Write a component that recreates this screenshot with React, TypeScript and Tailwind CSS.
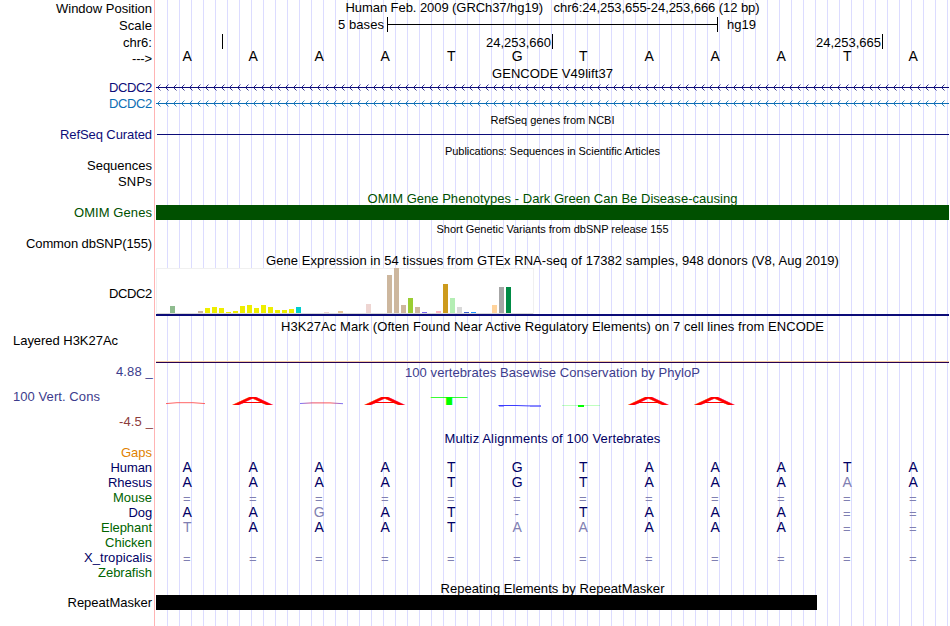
import { useLayoutEffect, useRef } from "react";
import { clsx } from "clsx";

/** Single line of text whose tracking is adjusted so that it fills `width`. */
function Fit({ text, width, className }: { text: string; width: number; className?: string }) {
  const ref = useRef<HTMLSpanElement>(null);
  useLayoutEffect(() => {
    const el = ref.current;
    if (!el) return;
    el.style.letterSpacing = "0px";
    const natural = el.getBoundingClientRect().width;
    el.style.letterSpacing = `${(width - natural) / text.length}px`;
  }, [text, width]);
  return (
    <span ref={ref} className={clsx("inline-block whitespace-pre", className)}>
      {text}
    </span>
  );
}

type LabelRow = { text: string; width: number; className: string };

const LABELS: LabelRow[] = [
  { text: "Window Position", width: 96, className: "mt-px" },
  { text: "Scale", width: 33, className: "mt-0.5" },
  { text: "chr6:", width: 29, className: "mt-0.5" },
  { text: "--->", width: 20, className: "mt-px" },
  { text: "DCDC2", width: 43, className: "mt-3.5 text-[#0c0c78]" },
  { text: "DCDC2", width: 43, className: "mt-px text-[#0c6eb4]" },
  { text: "RefSeq Curated", width: 92, className: "mt-4 text-[#0c0c78]" },
  { text: "Sequences", width: 65, className: "mt-4" },
  { text: "SNPs", width: 34, className: "mt-px" },
  { text: "OMIM Genes", width: 78, className: "mt-4 text-[#005000]" },
  { text: "Common dbSNP(155)", width: 126, className: "mt-4" },
  { text: "DCDC2", width: 43, className: "mt-[35px]" },
  { text: "Layered H3K27Ac", width: 105, className: "mt-8 self-start ml-[13px]" },
  { text: "4.88 _", width: 37, className: "mt-4 text-[#3c3c8c]" },
  { text: "100 Vert. Cons", width: 87, className: "mt-2.5 self-start ml-[13px] text-[#3c3c8c]" },
  { text: "-4.5 _", width: 34, className: "mt-2.5 text-[#8c3c3c]" },
  { text: "Gaps", width: 31, className: "mt-4 text-[#e18200]" },
  { text: "Human", width: 41.5, className: "text-[#000064]" },
  { text: "Rhesus", width: 44, className: "text-[#000064]" },
  { text: "Mouse", width: 39, className: "text-[#006400]" },
  { text: "Dog", width: 23.5, className: "text-[#000064]" },
  { text: "Elephant", width: 51, className: "text-[#006400]" },
  { text: "Chicken", width: 47, className: "text-[#006400]" },
  { text: "X_tropicalis", width: 68, className: "text-[#000064]" },
  { text: "Zebrafish", width: 54, className: "text-[#006400]" },
  { text: "RepeatMasker", width: 84.5, className: "mt-[15px]" },
];

const ALIGNMENTS = [
  "AAAATGTAAATA",
  "AAAATGTAAAaA",
  "============",
  "AAgAT-TAAA==",
  "tAAATaaAAA==",
  "            ",
  "============",
  "            ",
];

const BARS: Record<number, [number, string]> = {
  2: [7, "#8fbc8f"],
  6: [2, "#cdb79e"],
  7: [5, "#eeee00"],
  8: [6, "#eeee00"],
  9: [5, "#eeee00"],
  10: [1, "#eeee00"],
  11: [2, "#eeee00"],
  12: [7, "#eeee00"],
  13: [8, "#eeee00"],
  14: [5, "#eeee00"],
  15: [8, "#eeee00"],
  16: [6, "#eeee00"],
  17: [3, "#eeee00"],
  18: [3, "#eeee00"],
  19: [4, "#eeee00"],
  20: [6, "#00cdcd"],
  24: [1, "#eed5d2"],
  26: [2, "#e6c799"],
  30: [9, "#eed5d2"],
  33: [38, "#cdb79e"],
  34: [45, "#cdb79e"],
  35: [8, "#cdb79e"],
  36: [15, "#9acd32"],
  37: [6, "#cdb79e"],
  38: [1, "#7a67ee"],
  40: [2, "#ffb6c1"],
  41: [29, "#cd9b1d"],
  42: [15, "#b4eeb4"],
  43: [6, "#d9d9d9"],
  44: [1, "#3a5fcd"],
  45: [1, "#1e90ff"],
  48: [8, "#ffd39b"],
  49: [26, "#a6a6a6"],
  50: [26, "#008b45"],
};

function Bases({ seq, className }: { seq: string; className?: string }) {
  return (
    <div className={clsx("-ml-[1.5px] flex h-[15px] text-sm leading-[14px]", className)}>
      {[...seq].map((c, i) => {
        const mark = c === "=" || c === "-";
        const faded = mark || c !== c.toUpperCase();
        return (
          <span
            key={i}
            className={clsx(
              "w-[66px] shrink-0 text-center",
              faded && "text-[#8080b2]",
              mark ? "pt-px pr-[1.5px] text-[13px] leading-[15px]" : "pr-[0.5px]"
            )}
          >
            {c.toUpperCase()}
          </span>
        );
      })}
    </div>
  );
}

function GeneLine({ color, className }: { color: string; className?: string }) {
  return (
    <svg width="793" height="7" className={clsx("block shrink-0", className)} shapeRendering="crispEdges">
      <rect x="0" y="3" width="793" height="1" fill={color} />
      {Array.from({ length: 99 }, (_, i) => (
        <g key={i} fill={color} transform={`translate(${i * 8 + 1} 0)`}>
          <rect x="1" y="2" width="1" height="1" opacity="0.85" />
          <rect x="2" y="1" width="1" height="1" opacity="0.85" />
          <rect x="3" y="0" width="1" height="1" opacity="0.4" />
          <rect x="1" y="4" width="1" height="1" opacity="0.85" />
          <rect x="2" y="5" width="1" height="1" opacity="0.85" />
          <rect x="3" y="6" width="1" height="1" opacity="0.4" />
        </g>
      ))}
    </svg>
  );
}

/** Sequence logo: letters stretched over a column, scaled by conservation. */
function Logo() {
  const font = "font-['Liberation_Sans',Arial,sans-serif] text-[100px]";
  return (
    <svg width="793" height="20" className="mt-2.5 block shrink-0">
      <defs>
        <linearGradient id="mixed">
          <stop offset="0" stopColor="#6464ff" />
          <stop offset="0.3" stopColor="#e63c5a" />
          <stop offset="0.7" stopColor="#ff4646" />
          <stop offset="1" stopColor="#6464ff" />
        </linearGradient>
      </defs>
      <path d="M10 13.6 L21 12.7 H37 L49 13.6" fill="none" stroke="#ff3c3c" strokeWidth="0.8" />
      <path d="M144 13.5 L156 12.9 H174 L187 13.7" fill="none" stroke="url(#mixed)" strokeWidth="0.9" />
      {[96.8, 228.8, 492.6, 558.6].map((x) => (
        <text key={x} className={font} textAnchor="middle" fill="#ff0000" transform={`translate(${x} 14.8) scale(0.6 0.112)`} stroke="#ff0000" strokeWidth="1.5">
          A
        </text>
      ))}
      <text className={font} textAnchor="middle" fill="#00ff00" transform="translate(293 15) scale(0.65 0.116)">
        T
      </text>
      <path d="M342.5 15.5 H360 L372 15.9 H385" fill="none" stroke="#3c3cff" strokeWidth="1" />
      <path d="M343 16.5 H348 M374 16.5 H385" fill="none" stroke="#6464ff" strokeWidth="0.6" />
      <rect x="406" y="15" width="38" height="1" fill="#00ff00" opacity="0.25" />
      <rect x="422" y="15" width="6" height="2" fill="#00ff00" />
    </svg>
  );
}

export default function App() {
  return (
    <div className="flex h-[626px] w-[950px] overflow-hidden bg-white font-['Liberation_Sans',Arial,sans-serif] text-[13px] leading-[15px] text-black">
      <div className="flex w-[154px] shrink-0 flex-col items-end pr-0.5">
        {LABELS.map((l, i) => (
          <Fit
            key={i}
            text={l.text}
            width={l.width}
            className={clsx("h-[15px] shrink-0", l.text.endsWith("_") && "-mr-px", l.className)}
          />
        ))}
      </div>
      <div className="mr-px w-px shrink-0 bg-[#ffb4b4]" />
      <div className="flex w-[793px] shrink-0 flex-col overflow-hidden bg-[repeating-linear-gradient(to_right,transparent_0px_11px,#dcdcff_11px_12px)]">
        <Fit className="h-[15px] shrink-0 self-center" width={414} text="Human Feb. 2009 (GRCh37/hg19)   chr6:24,253,655-24,253,666 (12 bp)" />

        <div className="mt-0.5 flex h-[15px] shrink-0">
          <div className="flex w-[231px] justify-end pr-[3px]">
            <Fit text="5 bases" width={46} />
          </div>
          <div className="flex w-[331px] border-x border-black">
            <div className="mt-[7px] h-px w-full bg-black" />
          </div>
          <Fit className="ml-[9px]" text="hg19" width={29} />
        </div>

        <div className="mt-0.5 flex h-[15px] shrink-0">
          <div className="w-[67px] border-r border-black" />
          <div className="flex w-[330px] justify-end border-r border-black pt-px pr-px">
            <Fit text="24,253,660" width={65} />
          </div>
          <div className="flex w-[330px] justify-end border-r border-black pt-px pr-px">
            <Fit text="24,253,665" width={65} />
          </div>
        </div>

        <Bases seq="AAAATGTAAATA" />

        <Fit className="mt-0.5 h-[15px] shrink-0 self-center" text="GENCODE V49lift37" width={121} />
        <GeneLine className="mt-[3px]" color="#0c0c78" />
        <GeneLine className="mt-[9px]" color="#0c6eb4" />

        <Fit className="mt-[7px] h-3 shrink-0 self-center text-[11px] leading-3" text="RefSeq genes from NCBI" width={124} />
        <div className="mt-2 ml-px h-px shrink-0 bg-[#0c0c78]" />

        <Fit className="mt-2.5 h-3 shrink-0 self-center text-[11px] leading-3" text="Publications: Sequences in Scientific Articles" width={215} />

        <Fit
          className="mt-[34px] h-3.5 shrink-0 self-center text-[#005000]"
          text="OMIM Gene Phenotypes - Dark Green Can Be Disease-causing"
          width={370}
        />
        <div className="h-[15px] shrink-0 bg-[#005000]" />

        <Fit className="mt-[3px] h-3 shrink-0 self-center text-[11px] leading-3" text="Short Genetic Variants from dbSNP release 155" width={232} />

        <Fit
          className="mt-[18px] h-[15px] shrink-0 self-center"
          text="Gene Expression in 54 tissues from GTEx RNA-seq of 17382 samples, 948 donors (V8, Aug 2019)"
          width={573}
        />
        <div className="flex h-[46px] w-[378px] shrink-0 items-end gap-0.5 bg-white pb-px shadow-[inset_0_1px_#f0f0f0,inset_1px_0_#f0f0f0,inset_-1px_0_#f0f0f0,inset_0_-1px_#d8d8d8]">
          {Array.from({ length: 54 }, (_, i) => (
            <div
              key={i}
              className="w-[5px] shrink-0"
              style={{ height: BARS[i]?.[0] ?? 0, backgroundColor: BARS[i]?.[1] }}
            />
          ))}
        </div>
        <div className="h-0.5 shrink-0 bg-[#0c0c78]" />

        <Fit
          className="mt-[3px] h-[15px] shrink-0 self-center"
          text="H3K27Ac Mark (Often Found Near Active Regulatory Elements) on 7 cell lines from ENCODE"
          width={543}
        />
        <div className="mt-[27px] h-0.5 shrink-0 border-t border-[#f0c8a0] bg-[#280050]" />

        <Fit
          className="mt-0.5 h-[15px] shrink-0 self-center text-[#3c3c8c]"
          text="100 vertebrates Basewise Conservation by PhyloP"
          width={295}
        />
        <Logo />

        <Fit
          className="mt-[21px] h-[15px] shrink-0 self-center text-[#000064]"
          text="Multiz Alignments of 100 Vertebrates"
          width={216}
        />
        <div className="mt-3.5 flex h-[120px] shrink-0 flex-col text-[#000064]">
          {ALIGNMENTS.map((seq, i) => (
            <Bases key={i} seq={seq} />
          ))}
        </div>

        <Fit className="mt-px h-3.5 shrink-0 self-center" text="Repeating Elements by RepeatMasker" width={224} />
        <div className="h-[15px] w-[661px] shrink-0 bg-black" />
      </div>
    </div>
  );
}
